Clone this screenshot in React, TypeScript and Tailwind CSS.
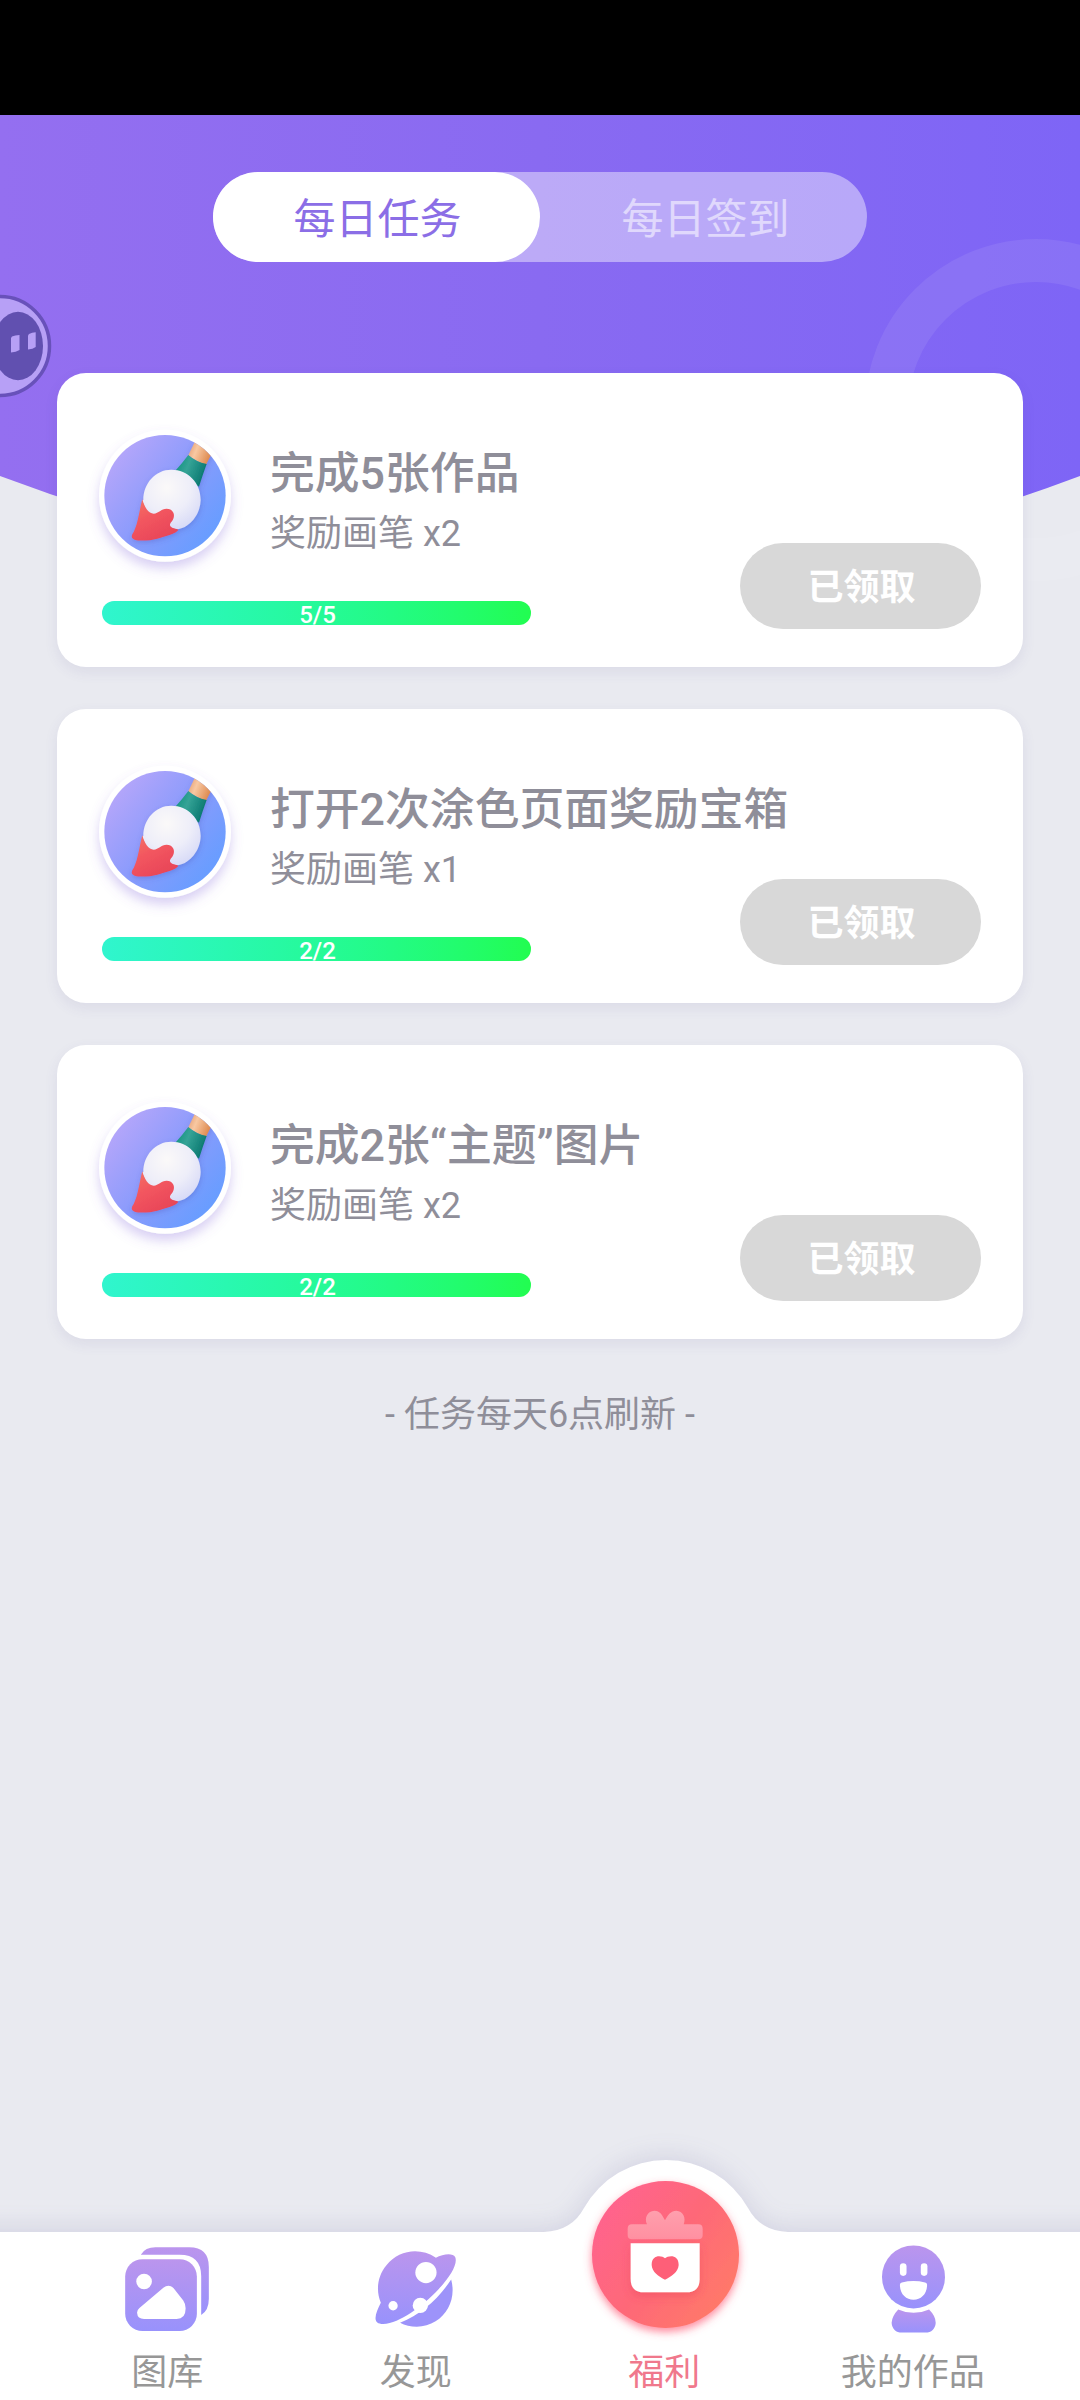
import { useState } from "react"
import type { ReactNode } from "react"
import clsx from "clsx"

const tasks = [
  { title: "完成5张作品", reward: "奖励画笔 x2", done: 5, total: 5 },
  { title: "打开2次涂色页面奖励宝箱", reward: "奖励画笔 x1", done: 2, total: 2 },
  { title: "完成2张“主题”图片", reward: "奖励画笔 x2", done: 2, total: 2 },
]

function BrushIcon() {
  return (
    <svg viewBox="0 0 450 450" className="h-[150px] w-[150px] shrink-0 overflow-visible">
      <defs>
        <linearGradient id="brushBg" x1="0.1" y1="0.15" x2="0.9" y2="0.8">
          <stop offset="0" stopColor="#b5a6fa" />
          <stop offset="0.5" stopColor="#8b9bfc" />
          <stop offset="1" stopColor="#689dff" />
        </linearGradient>
        <radialGradient id="brushHead" cx="0.42" cy="0.3" r="0.75">
          <stop offset="0" stopColor="#fbf9f9" />
          <stop offset="0.55" stopColor="#eeeef9" />
          <stop offset="1" stopColor="#d6d9f7" />
        </radialGradient>
        <linearGradient id="brushNeck" x1="0" y1="0.2" x2="1" y2="0.6">
          <stop offset="0" stopColor="#10917f" />
          <stop offset="0.4" stopColor="#35a396" />
          <stop offset="1" stopColor="#06746d" />
        </linearGradient>
        <linearGradient id="brushStick" x1="0" y1="0.2" x2="1" y2="0.6">
          <stop offset="0" stopColor="#e39c72" />
          <stop offset="0.35" stopColor="#f8c8a2" />
          <stop offset="1" stopColor="#db8345" />
        </linearGradient>
        <linearGradient id="brushTip" x1="0" y1="0" x2="0.6" y2="1">
          <stop offset="0" stopColor="#f57465" />
          <stop offset="0.5" stopColor="#f2555f" />
          <stop offset="1" stopColor="#e84658" />
        </linearGradient>
        <clipPath id="brushClip">
          <circle cx="225" cy="227" r="182" />
        </clipPath>
        <filter id="brushShadow" x="-30%" y="-30%" width="160%" height="170%">
          <feDropShadow dx="0" dy="20" stdDeviation="17" floodColor="#7f60d8" floodOpacity="0.3" />
        </filter>
        <filter id="brushSoft" x="-30%" y="-30%" width="160%" height="160%">
          <feDropShadow dx="2" dy="6" stdDeviation="8" floodColor="#4b50b0" floodOpacity="0.3" />
        </filter>
      </defs>
      <circle cx="225" cy="227" r="198" fill="#fff" filter="url(#brushShadow)" />
      <circle cx="225" cy="227" r="182" fill="url(#brushBg)" />
      <g clipPath="url(#brushClip)">
        <g filter="url(#brushSoft)">
          <path d="M316 62 L368 95 L348 134 Q320 126 295 106 Z" fill="url(#brushStick)" />
          <path d="M295 105 Q318 126 350 132 Q338 165 327 200 L256 152 Q278 128 295 105 Z" fill="url(#brushNeck)" />
          <path
            d="M160 240 C160 190 196 149 244 149 C294 149 332 188 332 240 C331 284 300 322 263 328 C236 330 170 300 157 240 Z"
            fill="url(#brushHead)"
          />
          <path
            d="M157 238 C163 262 176 281 191 281 C206 280 213 266 230 266 C247 266 255 280 251 293 C248 305 239 308 240 316 C242 324 253 325 265 329 C262 340 220 350 202 356 C180 362 150 364 134 359 C122 354 124 346 131 336 C145 308 148 270 157 238 Z"
            fill="url(#brushTip)"
          />
        </g>
      </g>
    </svg>
  )
}

function NavGradient({ id }: { id: string }) {
  return (
    <defs>
      <linearGradient id={id} x1="0" y1="0" x2="0" y2="1">
        <stop offset="0" stopColor="#bb95ed" />
        <stop offset="1" stopColor="#9892fc" />
      </linearGradient>
    </defs>
  )
}

function GalleryIcon() {
  return (
    <svg viewBox="77 140 252 253" className="h-[84px] w-[84px]">
      <NavGradient id="galleryFill" />
      <path
        d="M124 163 Q138 141 168 141 H270 Q329 141 329 200 V296 Q329 331 306 345 V228 Q306 163 241 163 Z"
        fill="url(#galleryFill)"
      />
      <rect x="77" y="177" width="216" height="216" rx="52" fill="url(#galleryFill)" />
      <circle cx="134" cy="244" r="23.500" fill="#fff" />
      <path
        d="M120 324 L192 263 Q208 250 223 264 L252 301 Q259 311 259 324 Q260 357 232 357 H134 Q114 357 113 339 Q112 331 120 324 Z"
        fill="#fff"
      />
    </svg>
  )
}

function PlanetIcon() {
  return (
    <svg viewBox="828 152 243 229" className="h-[76px] w-[81px]">
      <NavGradient id="planetFill" />
      <path
        d="M845 308 C830 272 834 228 862 195 C898 149 962 139 1011 172 C1032 161 1062 157 1069 170 C1078 190 1054 230 1019 267 C966 322 904 368 852 372 C836 372 829 366 829 354 C829 340 837 324 845 308 Z"
        fill="url(#planetFill)"
      />
      <path d="M1057 238 C1071 290 1050 338 1010 364 C978 385 933 384 903 368 C966 343 1018 297 1057 238 Z" fill="#9d93fa" />
      <circle cx="981" cy="217" r="32" fill="#fff" />
      <circle cx="882" cy="317" r="14" fill="#fff" />
      <circle cx="964" cy="316" r="23" fill="#fff" />
    </svg>
  )
}

function GiftIcon() {
  return (
    <svg viewBox="187 122 441 441" className="ml-[2px] h-[147px] w-[147px] -translate-y-[35px] overflow-visible">
      <defs>
        <linearGradient id="giftBg" x1="0.1" y1="0.2" x2="0.9" y2="0.8">
          <stop offset="0" stopColor="#ff648c" />
          <stop offset="0.5" stopColor="#fe6878" />
          <stop offset="1" stopColor="#ff786a" />
        </linearGradient>
        <linearGradient id="giftLid" x1="0" y1="0" x2="0" y2="1">
          <stop offset="0" stopColor="#ff9fad" />
          <stop offset="1" stopColor="#ff90a1" />
        </linearGradient>
        <filter id="giftGlow" x="-30%" y="-30%" width="160%" height="160%">
          <feDropShadow dx="0" dy="12" stdDeviation="13" floodColor="#ff4d6a" floodOpacity="0.65" />
        </filter>
        <filter id="giftBoxShadow" x="-30%" y="-30%" width="160%" height="170%">
          <feDropShadow dx="0" dy="12" stdDeviation="14" floodColor="#e83f5a" floodOpacity="0.4" />
        </filter>
      </defs>
      <circle cx="407.500" cy="342.500" r="220.500" fill="url(#giftBg)" filter="url(#giftGlow)" />
      <path
        d="M352 252 C343 232 354 212 374 211 C391 211 398 224 406 240 C414 224 424 211 440 211 C460 212 470 232 462 252 H506 Q519 252 519 265 V284 Q519 297 506 297 H307 Q294 297 294 284 V265 Q294 252 307 252 Z"
        fill="url(#giftLid)"
      />
      <path
        d="M303 309 H510 V416 Q510 456 470 456 H343 Q303 456 303 416 Z"
        fill="#fff"
        filter="url(#giftBoxShadow)"
      />
      <path
        d="M406 354 C416 345 447 341 447 374 C446 395 425 409 406 418 C387 409 367 395 366 374 C366 341 397 345 406 354 Z"
        fill="#fe5f78"
      />
    </svg>
  )
}

function PersonIcon() {
  return (
    <svg viewBox="248 105 190 263" className="ml-[2px] h-[88px] w-[63px]">
      <NavGradient id="personFill" />
      <circle cx="343" cy="200" r="95" fill="url(#personFill)" />
      <rect x="302" y="159" width="20" height="38" rx="10" fill="#fff" />
      <rect x="365" y="159" width="20" height="38" rx="10" fill="#fff" />
      <path d="M302 224 Q302 218 308 217 Q343 208 378 217 Q384 218 384 224 C384 252 365 269 343 269 C321 269 302 252 302 224 Z" fill="#fff" />
      <path
        d="M297 298 Q343 319 390 298 Q410 318 410 338 C409 356 397 368 379 368 H308 C290 368 278 356 277 338 Q278 318 297 298 Z"
        fill="url(#personFill)"
      />
    </svg>
  )
}

function TaskCard({ title, reward, done, total }: (typeof tasks)[number]) {
  return (
    <div className="flex h-[294px] items-start rounded-[29px] bg-white pt-[47px] pr-[42px] pl-[33px] shadow-[0_5px_14px_rgba(80,70,140,0.09)]">
      <div className="min-w-0 flex-1">
        <div className="flex gap-[30px]">
          <BrushIcon />
          <div className="mt-6 whitespace-nowrap text-[#8f8e99]">
            <h3 className="text-[44.8px] leading-[60px] font-medium">{title}</h3>
            <p className="text-[36px] leading-[60px]">{reward}</p>
          </div>
        </div>
        <div className="mt-[31px] ml-3 h-6 w-[429px]">
          <div
            className="h-full rounded-full bg-linear-to-r from-[#30f5ce] to-[#22fd50] pl-[2px] text-center text-[24px] leading-[28px] font-medium text-white"
            style={{ width: `${(done / total) * 100}%` }}
          >
            {done}/{total}
          </div>
        </div>
      </div>
      <button className="mt-[123px] h-[86px] w-[241px] shrink-0 rounded-full bg-[#d8d8d8] pt-1 pl-[2px] text-[36px] leading-[82px] font-bold text-white">
        已领取
      </button>
    </div>
  )
}

function NavItem({ label, active, children }: { label: string; active?: boolean; children: ReactNode }) {
  return (
    <button className="flex flex-1 flex-col items-center">
      <span className="flex h-[114px] items-center justify-center">{children}</span>
      <span
        className={clsx("text-[36px] leading-[54px] whitespace-nowrap", active ? "text-[#f0788c]" : "text-[#979797]")}
      >
        {label}
      </span>
    </button>
  )
}

export default function App() {
  const [tab, setTab] = useState(0)

  return (
    <div
      lang="zh-CN"
      className="relative flex h-[2400px] w-[1080px] flex-col overflow-hidden bg-[#e9eaf0] font-['Roboto','Noto_Sans_CJK_SC',sans-serif]"
    >
      {/* curved header backdrop with the decorative ring */}
      <svg viewBox="0 0 1080 600" className="absolute top-0 left-0 h-[600px] w-[1080px]">
        <defs>
          <linearGradient id="headerFill" x1="0" y1="0" x2="1" y2="0">
            <stop offset="0" stopColor="#946ff0" />
            <stop offset="0.5" stopColor="#896af1" />
            <stop offset="1" stopColor="#7e65f6" />
          </linearGradient>
        </defs>
        <path d="M0 115 H1080 V476 Q540 680 0 476 Z" fill="url(#headerFill)" />
        <circle cx="1036" cy="410" r="149.500" fill="none" stroke="#fff" strokeOpacity="0.08" strokeWidth="43" />
      </svg>

      <div className="h-[115px] shrink-0 bg-black" />

      <main className="relative flex-1">
        <div className="mx-auto mt-[57px] flex h-[90px] w-[654px] rounded-full bg-white/43">
          {["每日任务", "每日签到"].map((name, i) => (
            <button
              key={name}
              onClick={() => setTab(i)}
              className={clsx(
                "w-[327px] rounded-full pt-[5px] text-[42px] leading-[85px]",
                tab === i ? "bg-white pl-[2px] text-[#8b6ee6]" : "pl-1 text-white/55"
              )}
            >
              {name}
            </button>
          ))}
        </div>

        <div className="mt-[111px] flex flex-col gap-[42px] px-[57px]">
          {tasks.map((task) => (
            <TaskCard key={task.title} {...task} />
          ))}
        </div>

        <p className="mt-[49px] text-center text-[36px] leading-[54px] text-[#8f8e99]">- 任务每天6点刷新 -</p>
      </main>

      <nav className="relative flex h-[168px] shrink-0 px-[43px]">
        <svg
          viewBox="0 2160 1080 240"
          className="absolute bottom-0 left-0 h-[240px] w-[1080px] overflow-visible drop-shadow-[0_-3px_12px_rgba(80,70,140,0.14)]"
        >
          <path
            d="M-40 2232 H544 C563 2231 576 2223 584 2208 A94 94 0 0 1 748 2208 C756 2223 769 2231 788 2232 H1120 V2440 H-40 Z"
            fill="#fff"
          />
        </svg>
        <div className="relative flex flex-1">
          <NavItem label="图库">
            <GalleryIcon />
          </NavItem>
          <NavItem label="发现">
            <PlanetIcon />
          </NavItem>
          <NavItem label="福利" active>
            <GiftIcon />
          </NavItem>
          <NavItem label="我的作品">
            <PersonIcon />
          </NavItem>
        </div>
      </nav>

      {/* floating assistant peeking in from the left edge */}
      <svg viewBox="0 0 52 104" className="absolute top-[294px] left-0 h-[104px] w-[52px]">
        <circle cx="0" cy="52" r="49.500" fill="#b7a0f6" stroke="#6851ba" strokeWidth="3.500" />
        <ellipse cx="18" cy="52" rx="25" ry="34.200" fill="#6150b0" />
        <path d="M12 42.500 Q15 41 19.500 41 V56 Q16 58 11 58.500 V44 Z" fill="#b7a0f6" />
        <path d="M29 40 Q32 38.500 35.700 38.300 V53 Q33 55 28 55.500 V41.500 Z" fill="#b7a0f6" />
      </svg>
    </div>
  )
}
